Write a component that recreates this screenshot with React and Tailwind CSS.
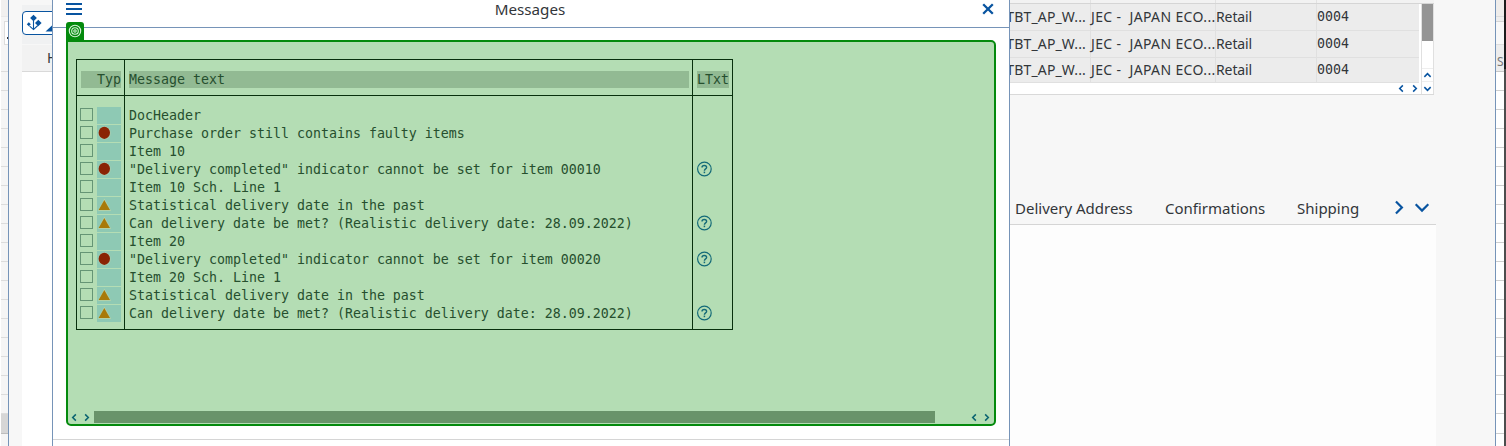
const MESSAGES = [
  { text: 'DocHeader' },
  { type: 'error', text: 'Purchase order still contains faulty items' },
  { text: 'Item 10' },
  { type: 'error', text: '"Delivery completed" indicator cannot be set for item 00010', help: true },
  { text: 'Item 10 Sch. Line 1' },
  { type: 'warning', text: 'Statistical delivery date in the past' },
  { type: 'warning', text: 'Can delivery date be met? (Realistic delivery date: 28.09.2022)', help: true },
  { text: 'Item 20' },
  { type: 'error', text: '"Delivery completed" indicator cannot be set for item 00020', help: true },
  { text: 'Item 20 Sch. Line 1' },
  { type: 'warning', text: 'Statistical delivery date in the past' },
  { type: 'warning', text: 'Can delivery date be met? (Realistic delivery date: 28.09.2022)', help: true },
];

const MONO = "font-['DejaVu_Sans_Mono','Liberation_Mono',monospace] text-[13.29px]";

function Chevron({ dir, className, weight = 1.7 }) {
  const paths = {
    left: 'M6.5 1.5 L3 5 L6.5 8.5',
    right: 'M3.5 1.5 L7 5 L3.5 8.5',
    up: 'M1.5 6.5 L5 3 L8.5 6.5',
    down: 'M1.5 3.5 L5 7 L8.5 3.5',
  };
  return (
    <svg viewBox="0 0 10 10" className={className} fill="none" stroke="currentColor" strokeWidth={weight}>
      <path d={paths[dir]} />
    </svg>
  );
}

function StatusIcon({ type }) {
  if (type === 'error') {
    return (
      <svg width="16" height="17" viewBox="0 0 16 17">
        <ellipse cx="7.5" cy="7.9" rx="6.3" ry="6.7" fill="#a9cdb0" />
        <ellipse cx="7.3" cy="7.8" rx="5.7" ry="6.1" fill="#8a2404" />
      </svg>
    );
  }
  if (type === 'warning') {
    return (
      <svg width="16" height="17" viewBox="0 0 16 17">
        <path d="M7.4 1.4 L14.2 14 H0.8 Z" fill="#b3d2a8" />
        <path d="M7.3 2.9 L13 13.1 H1.6 Z" fill="#a87a08" />
      </svg>
    );
  }
  return null;
}

function HelpIcon() {
  return (
    <svg width="16" height="16" viewBox="0 0 16 16" fill="none" stroke="#146a78">
      <circle cx="8.4" cy="8" r="6.8" strokeWidth="1.2" />
      <path d="M6 6.4 C6 3.9 10.6 3.9 10.6 6.4 C10.6 8 8.4 7.9 8.4 9.8" strokeWidth="1.4" />
      <path d="M8.4 10.6 V12.2" strokeWidth="1.5" />
    </svg>
  );
}

function MessageTable() {
  return (
    <div className={`ml-[8px] flex h-[271px] w-[657px] border border-[#08300d] text-[#264f2e] ${MONO}`}>
      <div className="flex w-[48px] flex-col border-r border-[#08300d]">
        <div className="h-[36px] shrink-0 border-b border-[#08300d] pt-[11px] pl-[4px]">
          <div className="h-[17px] w-[40px] bg-[#92ba93] pl-[16px] leading-[17px]">Typ</div>
        </div>
        <div className="pt-[11px]">
          {MESSAGES.map((m, i) => (
            <div key={i} className="flex h-[18px] pl-[3px]">
              <div className="mt-px h-[13px] w-[13px] border border-[#659575]" />
              <div className="ml-[4px] h-[17px] w-[24px] bg-[#8ec9b4]">
                <StatusIcon type={m.type} />
              </div>
            </div>
          ))}
        </div>
      </div>
      <div className="flex w-[568px] flex-col border-r border-[#08300d]">
        <div className="h-[36px] shrink-0 border-b border-[#08300d] pt-[11px] pl-[4px]">
          <div className="h-[17px] w-[560px] bg-[#92ba93] leading-[17px]">Message text</div>
        </div>
        <div className="pt-[11px] pl-[4px]">
          {MESSAGES.map((m, i) => (
            <div key={i} className="h-[18px] leading-[17px] whitespace-pre">{m.text}</div>
          ))}
        </div>
      </div>
      <div className="flex w-[39px] flex-col">
        <div className="h-[36px] shrink-0 border-b border-[#08300d] pt-[11px] pl-[4px]">
          <div className="h-[17px] w-[32px] bg-[#92ba93] leading-[17px]">LTxt</div>
        </div>
        <div className="pt-[11px] pl-[3px]">
          {MESSAGES.map((m, i) => (
            <div key={i} className="h-[18px]">{m.help && <HelpIcon />}</div>
          ))}
        </div>
      </div>
    </div>
  );
}

function Dialog() {
  return (
    <section className="flex w-[958px] shrink-0 flex-col border-x border-[#7694b8] bg-white">
      <header className="flex h-[28px] shrink-0 border-b border-[#7694b8]">
        <div className="mt-[3px] ml-[13px] flex w-[16px] flex-col gap-[3px]">
          <div className="h-[2px] bg-[#0854a0]" />
          <div className="h-[2px] bg-[#0854a0]" />
          <div className="h-[2px] bg-[#0854a0]" />
        </div>
        <h1 className="flex-1 text-center text-[15.2px] leading-[18px]"><span className="mr-[4px]">Messages</span></h1>
        <svg className="mt-[3px] mr-[15px] h-[12px] w-[12px]" viewBox="0 0 12 12" stroke="#0854a0" strokeWidth="2.3">
          <path d="M1.2 1.2 L10.8 10.8 M10.8 1.2 L1.2 10.8" />
        </svg>
      </header>
      <div className="-mt-[6px] ml-[13px] flex h-[18px] w-[18px] shrink-0 items-center justify-center rounded-t-[3px] bg-[#048a0d]">
        <svg width="14" height="14" viewBox="0 0 14 14" fill="none" stroke="#d9f2da" strokeWidth="1.1">
          <circle cx="7" cy="7" r="5.7" />
          <circle cx="7" cy="7" r="3.3" />
          <circle cx="7" cy="7" r="1.2" />
        </svg>
      </div>
      <div className="ml-[13px] flex h-[386px] w-[930px] shrink-0 flex-col rounded-[5px] rounded-tl-none border-2 border-[#048a0d] bg-[#b4ddb4] pt-[17px]">
        <MessageTable />
        <div className="mt-auto mb-[1px] flex h-[12px] items-center text-[#0b6470]">
          <Chevron dir="left" className="ml-[2px] h-[9px] w-[9px]" />
          <Chevron dir="right" className="ml-[3px] h-[9px] w-[9px]" />
          <div className="ml-[3px] h-[12px] w-[841px] bg-[#69936a]" />
          <Chevron dir="left" className="ml-[35px] h-[9px] w-[9px]" />
          <Chevron dir="right" className="ml-[3px] h-[9px] w-[9px]" />
        </div>
      </div>
      <div className="mt-[13px] h-px shrink-0 bg-[#d5d5d5]" />
    </section>
  );
}

function ItemGrid() {
  const rows = ['h-[27px] leading-[26px]', 'h-[27px] leading-[26px]', 'h-[25px] leading-[24px]'];
  return (
    <div className="flex h-[95px] w-[424px] flex-col border-b border-[#d9d9d9] bg-white">
      <div className="flex h-[4px] shrink-0 border-b border-[#d5d5d5] bg-[#f2f2f2]">
        <div className="w-[81px] border-r border-[#e2e2e2]" />
        <div className="w-[125px] border-r border-[#e2e2e2]" />
        <div className="w-[101px] border-r border-[#e2e2e2]" />
      </div>
      <div className="flex h-[90px]">
        <div className="flex w-[411px] shrink-0 flex-col">
          {rows.map((size, i) => (
            <div key={i} className={`flex w-[409px] border-b border-[#e0e0e0] bg-[#ececec] text-[14px] whitespace-pre last:border-b-0 ${size}`}>
              <div className="flex w-[81px] justify-end overflow-hidden border-r border-[#e0e0e0] pr-[4px]">
                <span className="tracking-[0.14px]">TBT_AP_W...</span>
              </div>
              <div className="w-[125px] border-r border-[#e0e0e0] tracking-[0.37px]">JEC -  JAPAN ECO...</div>
              <div className="w-[101px] border-r border-[#e0e0e0] tracking-[-0.1px]">Retail</div>
              <div className={MONO}>0004</div>
            </div>
          ))}
          <div className="flex h-[11px] items-center justify-end text-[#0854a0]">
            <Chevron dir="left" className="mr-[4px] h-[9px] w-[9px]" />
            <Chevron dir="right" className="mr-[2px] h-[9px] w-[9px]" />
          </div>
        </div>
        <div className="flex w-[13px] shrink-0 flex-col items-center border-x border-[#e0e0e0] text-[#0854a0]">
          <div className="h-[37px] w-full bg-[#949494]" />
          <div className="mt-[27px] flex h-[13px] w-full items-center justify-center border-t border-[#eeeeee]">
            <Chevron dir="up" className="h-[9px] w-[9px]" />
          </div>
          <div className="flex h-[13px] w-full items-center justify-center border-t border-[#eeeeee]">
            <Chevron dir="down" className="h-[9px] w-[9px]" />
          </div>
        </div>
      </div>
    </div>
  );
}

function BackgroundPage() {
  return (
    <section className="flex w-[486px] shrink-0 flex-col border-r border-[#7694b8] bg-[#f7f7f7]">
      <ItemGrid />
      <nav className="flex h-[130px] w-[426px] shrink-0 items-end border-b border-[#d5d5d5] pl-[5px] text-[15px] leading-[32px]">
        <div className="w-[150px]">Delivery Address</div>
        <div className="w-[132px]">Confirmations</div>
        <div className="w-[93px]">Shipping</div>
        <Chevron dir="right" className="mb-[8px] h-[17px] w-[17px] text-[#0854a0]" weight={1.3} />
        <Chevron dir="down" className="mb-[8px] ml-[6px] h-[18px] w-[18px] text-[#0854a0]" weight={1.2} />
      </nav>
      <div className="w-[426px] flex-1 bg-[#fdfdfd]" />
    </section>
  );
}

const STRIP_ROWS = Array.from({ length: 18 });

function LeftEdge() {
  return (
    <>
      <div className="flex w-[8px] shrink-0 flex-col border-l border-white bg-[#f5f5f5]">
        <div className="h-[17px] shrink-0 border-b border-[#e9e9e9] bg-[#f1f0ef]" />
        <div className="mt-[4px] ml-[3px] flex h-[24px] shrink-0 items-end border border-r-0 border-[#dddddd] bg-white pb-[5px] pl-[2px]">
          <div className="h-[2px] w-[1px] bg-[#333333]" />
        </div>
        <div className="h-[27px] shrink-0 border-b border-[#dcdcdc]" />
        {STRIP_ROWS.map((_, i) => (
          <div key={i} className="h-[19px] shrink-0 border-b border-[#dcdcdc]" />
        ))}
        <div className="h-[20px] shrink-0 border-b border-[#bdbdbd] bg-[#d6d6d6]" />
      </div>
      <div className="flex w-[44px] shrink-0 flex-col border-l border-[#7694b8] bg-[#f7f7f7] pl-[13px]">
        <div className="h-[5px] shrink-0" />
        <div className="h-[39px] shrink-0 overflow-hidden bg-[#f0f1f2] pt-[6px]">
          <div className="flex h-[24px] w-[40px] items-center rounded-[4px] border border-[#0854a0] bg-white">
            <svg className="ml-[3px] shrink-0" width="17" height="18" viewBox="0 0 17 18" fill="#0854a0">
              <path d="M7.5 0.8 L10.9 4 L7.5 7.2 L4.1 4 Z M12.3 5.8 L15.6 9 L12.3 12.2 L9 9 Z M2.8 8.2 L4.8 10.2 L2.8 12.2 L0.8 10.2 Z" />
              <path d="M7.5 5 V15.8 M3.6 12.2 L7.5 15.6 L11.8 11.5" fill="none" stroke="#0854a0" strokeWidth="1.1" />
            </svg>
            <svg className="mt-[9px] ml-[2px] shrink-0" width="8" height="8" viewBox="0 0 8 8" fill="#0854a0">
              <path d="M8 0.5 V7.5 H0.5 Z" />
            </svg>
          </div>
        </div>
        <div className="mt-[1px] flex h-[27px] shrink-0 border-b border-[#d9d9d9] bg-[#f2f2f2] pl-[25px] text-[14px] leading-[26px]">
          <div className="w-[5px] overflow-hidden">H</div>
        </div>
        <div className="flex-1 bg-white" />
      </div>
    </>
  );
}

function RightEdge() {
  return (
    <>
      <div className="flex w-[8px] shrink-0 flex-col bg-white">
        <div className="h-[17px] shrink-0 border-b border-[#dcdcdc] bg-[#efedeb]" />
        <div className="h-[5px] shrink-0 border-b border-[#d5d5d5] bg-[#eeeeee]" />
        <div className="h-[23px] shrink-0 border-b border-[#dedede] bg-[#f8f8f8]" />
        <div className="h-[27px] shrink-0 border-b border-[#c8c8c8] bg-[#ededed] pl-[1px] text-[12px] leading-[34px] text-[#777777]">S</div>
        {STRIP_ROWS.map((_, i) => (
          <div key={i} className="h-[19px] shrink-0 border-b border-[#cfcfcf]" />
        ))}
        <div className="h-[19px] shrink-0" />
        <div className="h-px shrink-0 bg-[#cfcfcf]" />
      </div>
      <div className="flex w-[2px] shrink-0 flex-col bg-[#4d4d4d]">
        <div className="h-[69px] bg-[#1c1c1c]" />
      </div>
    </>
  );
}

export default function App() {
  return (
    <main className="flex h-[446px] w-[1506px] overflow-hidden bg-white font-['Noto_Sans','Liberation_Sans',sans-serif] text-[#32363a]">
      <LeftEdge />
      <Dialog />
      <BackgroundPage />
      <RightEdge />
    </main>
  );
}
